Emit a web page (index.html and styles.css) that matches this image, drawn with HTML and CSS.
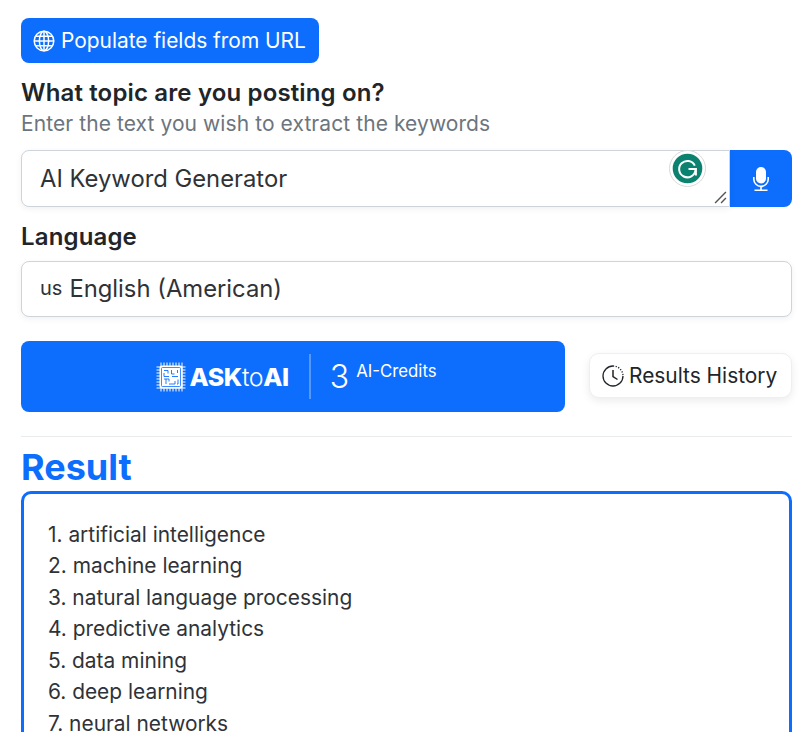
FILE: index.html
```html
<!DOCTYPE html>
<html lang="en">
<head>
<meta charset="utf-8">
<title>AI Keyword Generator</title>
<link rel="stylesheet" href="styles.css">
</head>
<body>
<main class="page">
  <button class="url-btn" type="button">
    <svg class="globe" viewBox="0 0 22 22" width="22" height="22" fill="none" stroke="#fff" stroke-width="1.5">
      <circle cx="11" cy="11" r="9.800"/>
      <ellipse cx="11" cy="11" rx="4.600" ry="9.800"/>
      <path d="M11 1.200v19.600M1.200 11h19.600M2.600 6.200h16.800M2.600 15.800h16.800"/>
    </svg>
    <span>Populate fields from URL</span>
  </button>

  <h2 class="label topic">What topic are you posting on?</h2>
  <p class="hint">Enter the text you wish to extract the keywords</p>

  <div class="input-group">
    <div class="field field-text">
      <span>AI Keyword Generator</span>
      <span class="grammarly">
        <svg viewBox="0 0 37 37" width="37" height="37">
          <circle cx="18.500" cy="18.500" r="18" fill="#fff" stroke="#d9d9d9"/>
          <circle cx="18.500" cy="18.500" r="14.800" fill="#0b8270"/>
          <path d="M25.800 15.700A8.200 8.200 0 1 0 26.500 20" fill="none" stroke="#fff" stroke-width="2"/>
          <path d="M19.500 19.100h7.400v6.400" fill="none" stroke="#fff" stroke-width="2"/>
        </svg>
      </span>
      <svg class="resize" viewBox="0 0 12 12" width="13" height="13" stroke="#555" stroke-width="1.300">
        <path d="M1 11 11 1M6.500 11 11 6.500"/>
      </svg>
    </div>
    <button class="mic" type="button" aria-label="Voice input">
      <svg viewBox="0 0 16 24" width="16" height="24" fill="none" stroke="#fff" stroke-width="1.600">
        <rect x="3" y="0" width="10" height="16.500" rx="5" fill="#fff" stroke="none"/>
        <path d="M0.800 10v2.200a7.200 7.200 0 0 0 14.400 0V10M8 19.500v3.500M1.500 23.200h13"/>
      </svg>
    </button>
  </div>

  <h2 class="label language">Language</h2>
  <div class="field field-select"><span class="flag">us</span><span>English (American)</span></div>

  <div class="actions">
    <button class="generate" type="button">
      <span class="brand">
        <svg class="chip" viewBox="0 0 30 30" width="30" height="30" fill="none" stroke="#fff">
          <path d="M5 .5v29M8 .5v29M11 .5v29M14 .5v29M17 .5v29M20 .5v29M23 .5v29M26 .5v29M.5 5h29M.5 8h29M.5 11h29M.5 14h29M.5 17h29M.5 20h29M.5 23h29M.5 26h29" stroke-width="1"/>
          <rect x="3.500" y="3.500" width="23" height="23" rx="2.500" fill="#fff" stroke="none"/>
          <rect x="5.500" y="5.500" width="19" height="19" rx="1" stroke="#0d6efd" stroke-width=".8"/>
          <path d="M8 8.500h4v3M8 11v3.500h5M15.500 8v4h3M21.500 8v3M16 14.500h6M8 17h5v2.500M10 17v5M13 22h6v-3M22 17.500v4.500h-1" stroke="#0d6efd" stroke-width=".9"/>
        </svg>
        <span class="brand-name"><b>ASK</b><span class="to">to</span><b>AI</b></span>
      </span>
      <span class="divider"></span>
      <span class="credits"><span class="count">3</span><span class="unit">AI-Credits</span></span>
    </button>
    <button class="history" type="button">
      <svg viewBox="0 0 22 22" width="22" height="22" fill="none" stroke="#212529" stroke-width="1.300">
        <path d="M11 1a10 10 0 1 0 10 10"/>
        <path d="M11 1a10 10 0 0 1 10 10" stroke-dasharray="1.200 1.500"/>
        <path d="M11 5v6.500l4.500 3" stroke-width="1.500"/>
      </svg>
      <span>Results History</span>
    </button>
  </div>

  <hr class="rule">

  <h1 class="result-title">Result</h1>
  <section class="result-box">
    <ol class="result-list">
      <li>1. artificial intelligence</li>
      <li>2. machine learning</li>
      <li>3. natural language processing</li>
      <li>4. predictive analytics</li>
      <li>5. data mining</li>
      <li>6. deep learning</li>
      <li>7. neural networks</li>
    </ol>
  </section>
</main>
</body>
</html>
```
FILE: styles.css
```css
* { box-sizing: border-box; }
html, body { margin: 0; height: 732px; overflow: hidden; background: #fff; }
body { font-family: Inter, "Liberation Sans", sans-serif; color: #212529; }
button { font-family: inherit; border: 0; cursor: pointer; }
.page { padding: 18px 13px 0 21px; }
.url-btn {
  display: flex; align-items: center; gap: 6px;
  width: 298px; height: 45px; padding: 0 12px;
  background: #0d6efd; color: #fff; border-radius: 8px; font-size: 20.9px; white-space: nowrap;
}
.label { margin: 0; font-size: 24px; font-weight: 600; line-height: 30px; letter-spacing: .15px; color: #212529; }
.topic { margin-top: 15px; }
.hint { margin: 1px 0 0; font-size: 21px; line-height: 30px; letter-spacing: .08px; color: #6c757d; }
.input-group { display: flex; margin-top: 11px; height: 57px; }
.field {
  display: flex; align-items: center;
  background: #fff; border: 1px solid #ced4da; font-size: 23.8px; color: #2f3338;
  box-shadow: 0 2px 6px rgba(0,0,0,.06);
}
.field-text { position: relative; flex: 1; padding: 0 18px; border-radius: 8px 0 0 8px; }
.grammarly { position: absolute; left: 647px; top: -1px; width: 37px; height: 37px; }
.grammarly svg, .resize { display: block; }
.resize { position: absolute; right: 2px; bottom: 2px; }
.mic {
  display: flex; align-items: center; justify-content: center;
  width: 62px; background: #0d6efd; border-radius: 0 8px 8px 0;
}
.language { margin-top: 15px; }
.field-select { height: 56px; margin-top: 9px; padding: 0 18px 2px; border-radius: 8px; }
.flag { font-size: 20px; margin-right: 7px; }
.actions { display: flex; align-items: center; justify-content: space-between; margin-top: 24px; }
.generate {
  display: flex; align-items: center; justify-content: center;
  width: 544px; height: 71px; padding: 0 0 0 7px; background: #0d6efd; color: #fff; border-radius: 8px;
}
.brand { display: flex; align-items: center; gap: 3px; }
.brand-name { font-size: 25px; letter-spacing: -.4px; }
.brand-name b { font-weight: 800; }
.to { font-weight: 300; }
.divider { width: 2px; height: 45px; margin: 0 19px 0 20px; background: rgba(255,255,255,.3); }
.credits { display: flex; align-items: flex-start; }
.count { font-size: 32px; line-height: 39px; font-weight: 300; }
.unit { font-size: 16.8px; line-height: 22px; margin: 3px 0 0 7px; font-weight: 400; }
.history {
  display: flex; align-items: center; gap: 5px;
  width: 203px; height: 45px; margin-bottom: 2px; padding: 0 12px;
  background: #fff; color: #212529; font-size: 20.9px; white-space: nowrap; border-radius: 10px;
  border: 1px solid #efefef; box-shadow: 0 3px 8px rgba(0,0,0,.08);
}
.rule { margin: 24px 0 0; border: 0; border-top: 1px solid #e9ecef; }
.result-title { margin: 8px 0 0; font-size: 36px; line-height: 44px; font-weight: 700; color: #0d6efd; }
.result-box { margin-top: 2px; height: 400px; padding: 24.6px 24px; border: 3px solid #0d6efd; border-radius: 10px; }
.result-list { list-style: none; margin: 0; padding: 0; font-size: 20.9px; line-height: 31.500px; color: #2f3338; }
```
